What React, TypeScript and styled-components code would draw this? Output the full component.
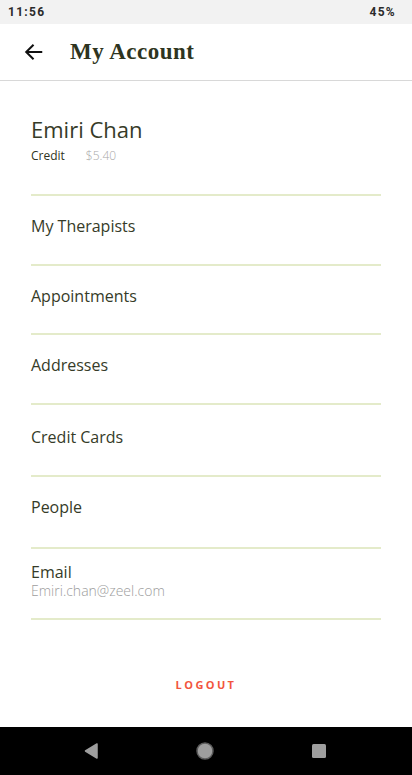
import React from 'react';
import styled, { createGlobalStyle } from 'styled-components';

const GlobalStyle = createGlobalStyle`
  html, body {
    margin: 0;
    padding: 0;
    background: #ffffff;
  }
  * {
    box-sizing: border-box;
  }
`;

const Screen = styled.div`
  width: 412px;
  height: 775px;
  display: flex;
  flex-direction: column;
  font-family: 'Open Sans', 'Liberation Sans', sans-serif;
  background: #ffffff;
  overflow: hidden;
`;

const StatusBar = styled.div`
  height: 24px;
  flex-shrink: 0;
  background: #f2f2f2;
  display: flex;
  align-items: center;
  justify-content: space-between;
  padding: 0 16px 0 8px;
  font-family: Roboto, 'Liberation Sans', sans-serif;
  font-size: 12px;
  font-weight: 700;
  letter-spacing: 1.3px;
  color: #2b2b2b;
`;

const Header = styled.header`
  height: 57px;
  flex-shrink: 0;
  display: flex;
  align-items: center;
  padding: 0 0 0 22px;
  border-bottom: 1px solid #d8d8d8;
`;

const BackButton = styled.button`
  border: none;
  background: none;
  padding: 0;
  width: 24px;
  height: 24px;
  display: flex;
  align-items: center;
  justify-content: center;
  margin-right: 24px;
  cursor: pointer;
`;

const Title = styled.h1`
  margin: 0;
  font-family: 'Liberation Serif', 'DejaVu Serif', serif;
  font-weight: 700;
  font-size: 23px;
  letter-spacing: 0.5px;
  color: #2e3420;
`;

const Content = styled.main`
  flex: 1;
  display: flex;
  flex-direction: column;
  padding: 0 31px;
`;

const Profile = styled.section`
  padding: 33px 0 29px;
  border-bottom: 2px solid #e4ebca;
`;

const Name = styled.div`
  font-size: 22px;
  line-height: 30px;
  color: #363b28;
`;

const CreditLine = styled.div`
  display: flex;
  gap: 21px;
  margin-top: 3px;
  font-size: 12px;
  line-height: 18px;
`;

const CreditLabel = styled.span`
  color: #2f3322;
`;

const CreditValue = styled.span`
  color: #a8a8a8;
  font-weight: 300;
`;

const Row = styled.div<{ $top?: number; $bottom?: number }>`
  padding: ${(p) => p.$top ?? 18}px 0 ${(p) => p.$bottom ?? 26}px;
  border-bottom: 2px solid #e4ebca;
  cursor: pointer;
`;

const RowLabel = styled.div<{ $lh?: number }>`
  font-size: 16px;
  line-height: ${(p) => p.$lh ?? 24}px;
  color: #363b28;
`;

const RowSub = styled.div`
  font-size: 14px;
  line-height: 18px;
  font-weight: 300;
  color: #9d9d9d;
`;

const Logout = styled.button`
  align-self: center;
  margin-top: 57px;
  border: none;
  background: none;
  padding: 0;
  font-family: 'Open Sans', 'Liberation Sans', sans-serif;
  font-size: 11px;
  line-height: 16px;
  font-weight: 700;
  letter-spacing: 2.4px;
  color: #f2553d;
  cursor: pointer;
`;

const NavBar = styled.nav`
  height: 48px;
  flex-shrink: 0;
  background: #000000;
  display: flex;
  align-items: center;
  justify-content: center;
  gap: 97px;
  padding-right: 3px;
`;

const items: { label: string; top?: number; bottom?: number }[] = [
  { label: 'My Therapists' },
  { label: 'Appointments', bottom: 25 },
  { label: 'Addresses' },
  { label: 'Credit Cards', top: 20, bottom: 26 },
  { label: 'People', top: 18, bottom: 28 },
];

export default function App() {
  return (
    <>
      <GlobalStyle />
      <Screen>
        <StatusBar>
          <span>11:56</span>
          <span>45%</span>
        </StatusBar>
        <Header>
          <BackButton aria-label="Back">
            <svg width="22" height="22" viewBox="0 0 24 24" fill="none" stroke="#111" strokeWidth="2.2">
              <path d="M21 12H3.5" />
              <path d="M11.5 4L3.5 12l8 8" />
            </svg>
          </BackButton>
          <Title>My Account</Title>
        </Header>
        <Content>
          <Profile>
            <Name>Emiri Chan</Name>
            <CreditLine>
              <CreditLabel>Credit</CreditLabel>
              <CreditValue>$5.40</CreditValue>
            </CreditLine>
          </Profile>
          {items.map((it) => (
            <Row key={it.label} $top={it.top} $bottom={it.bottom}>
              <RowLabel>{it.label}</RowLabel>
            </Row>
          ))}
          <Row $top={13} $bottom={18}>
            <RowLabel $lh={20}>Email</RowLabel>
            <RowSub>Emiri.chan@zeel.com</RowSub>
          </Row>
          <Logout>LOGOUT</Logout>
        </Content>
        <NavBar>
          <svg width="14" height="18" viewBox="0 0 14 18">
            <path d="M13 2v14L1.5 9z" fill="#9e9e9e" stroke="#9e9e9e" strokeWidth="1.5" strokeLinejoin="round" />
          </svg>
          <svg width="20" height="20" viewBox="0 0 20 20">
            <circle cx="10" cy="10" r="8" fill="#9e9e9e" stroke="#5c5c5c" strokeWidth="1.5" />
          </svg>
          <svg width="14" height="14" viewBox="0 0 14 14">
            <rect x="0" y="0" width="14" height="14" rx="1.5" fill="#9e9e9e" />
          </svg>
        </NavBar>
      </Screen>
    </>
  );
}
